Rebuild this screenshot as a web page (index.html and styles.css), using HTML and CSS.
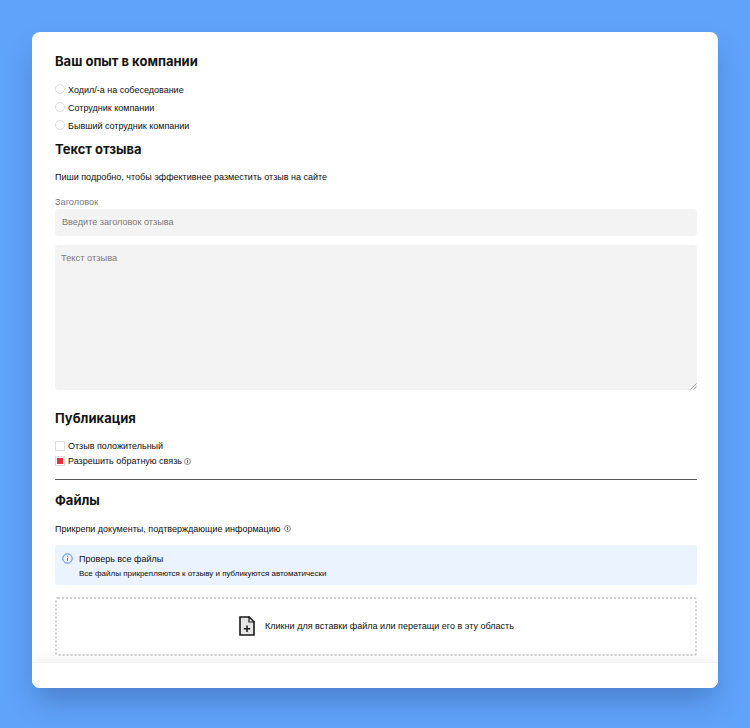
FILE: index.html
```html
<!DOCTYPE html>
<html lang="ru">
<head>
<meta charset="utf-8">
<title>Отзыв</title>
<link rel="stylesheet" href="styles.css">
</head>
<body>
<main class="card">
  <form class="content">
    <h2 class="title title-first">Ваш опыт в компании</h2>
    <div class="options">
      <label class="option"><span class="radio"></span>Ходил/-а на собеседование</label>
      <label class="option"><span class="radio"></span>Сотрудник компании</label>
      <label class="option"><span class="radio"></span>Бывший сотрудник компании</label>
    </div>
    <h2 class="title title-text">Текст отзыва</h2>
    <p class="hint hint-text">Пиши подробно, чтобы эффективнее разместить отзыв на сайте</p>
    <div class="field-label">Заголовок</div>
    <div class="input">Введите заголовок отзыва</div>
    <div class="textarea">Текст отзыва
      <svg class="grip" width="7" height="7" viewBox="0 0 7 7"><path d="M0.5 6.5L6.5 0.5M3.5 6.5L6.5 3.5" stroke="#a0a0a0" stroke-width="1" fill="none"/></svg>
    </div>
    <h2 class="title title-pub">Публикация</h2>
    <div class="checks">
      <label class="option"><span class="check"></span>Отзыв положительный</label>
      <label class="option"><span class="check check-on"></span>Разрешить обратную связь
        <svg class="tip" width="7" height="7" viewBox="0 0 7 7"><circle cx="3.5" cy="3.5" r="3" fill="none" stroke="#444" stroke-width="0.6"/><path d="M3.5 2v3.2" stroke="#444" stroke-width="0.8"/></svg>
      </label>
    </div>
    <hr class="rule">
    <h2 class="title title-files">Файлы</h2>
    <p class="hint hint-files">Прикрепи документы, подтверждающие информацию
      <svg class="tip" width="7" height="7" viewBox="0 0 7 7"><circle cx="3.5" cy="3.5" r="3" fill="none" stroke="#444" stroke-width="0.6"/><path d="M3.5 2v3.2" stroke="#444" stroke-width="0.8"/></svg>
    </p>
    <div class="notice">
      <svg class="notice-icon" width="11" height="11" viewBox="0 0 11 11"><circle cx="5.5" cy="5.5" r="4.7" fill="none" stroke="#3b7dd8" stroke-width="0.9"/><path d="M5.5 4.8v3" stroke="#3b7dd8" stroke-width="1"/><circle cx="5.5" cy="3.2" r="0.6" fill="#3b7dd8"/></svg>
      <div>
        <div class="notice-title">Проверь все файлы</div>
        <div class="notice-text">Все файлы прикрепляются к отзыву и публикуются автоматически</div>
      </div>
    </div>
    <div class="drop">
      <svg width="16" height="20" viewBox="0 0 16 20"><path d="M1 1H10L15 6V19H1Z" fill="#e6e6e6" stroke="#1a1a1a" stroke-width="1.6" stroke-linejoin="miter"/><path d="M10 1V6H15Z" fill="#fff" stroke="#1a1a1a" stroke-width="1.2"/><path d="M8 9.5V16M4.8 12.8H11.2" stroke="#1a1a1a" stroke-width="1.5"/></svg>
      <span>Кликни для вставки файла или перетащи его в эту область</span>
    </div>
  </form>
  <footer class="footer"></footer>
</main>
</body>
</html>
```
FILE: styles.css
```css
html, body { margin: 0; height: 100%; }
body {
  background: #60a3fa;
  height: 728px;
  padding: 32px;
  box-sizing: border-box;
  font-family: "Liberation Sans", Arial, sans-serif;
  font-size: 9px;
  color: #0d0d0d;
  overflow: hidden;
}
.card {
  width: 686px;
  height: 656px;
  background: #fff;
  border-radius: 8px;
  display: flex;
  flex-direction: column;
  overflow: hidden;
  box-shadow: 0 16px 28px -4px rgba(30, 60, 110, 0.34);
}
.content {
  flex: 1;
  min-height: 0;
  overflow: hidden;
  padding: 0 21px 0 23px;
  display: flex;
  flex-direction: column;
}
.title {
  margin: 0;
  font-family: Inter, "Noto Sans", sans-serif;
  font-size: 13px;
  line-height: 16px;
  font-weight: 700;
  color: #141414;
  flex: none;
}
.title-first { margin-top: 21px; }
.title-text { margin-top: 9px; }
.title-pub { margin-top: 20px; }
.title-files { margin-top: 12px; }
.options {
  margin-top: 16px;
  display: flex;
  flex-direction: column;
  gap: 7px;
}
.checks {
  margin-top: 15px;
  display: flex;
  flex-direction: column;
  gap: 4px;
}
.option {
  display: flex;
  align-items: center;
  gap: 3px;
  height: 11px;
  line-height: 11px;
}
.radio {
  width: 10px;
  height: 10px;
  border: 1px solid #dcdcdc;
  border-radius: 50%;
  background: #fff;
  margin-top: -4px;
  flex: none;
  box-sizing: border-box;
}
.check {
  width: 10px;
  height: 10px;
  border: 1px solid #dcdcdc;
  background: #fff;
  margin-top: -2px;
  flex: none;
  box-sizing: border-box;
}
.check-on {
  background: #e5323a;
  box-shadow: inset 0 0 0 1px #fff;
}
.tip { flex: none; margin-left: -1px; }
.hint { margin: 0; line-height: 11px; flex: none; }
.hint-text { margin-top: 15px; }
.hint-files { margin-top: 16px; }
.hint-files .tip { margin-left: 1px; }
.field-label {
  margin-top: 14px;
  line-height: 11px;
  font-size: 9.2px;
  color: #777;
  flex: none;
}
.input {
  margin-top: 1px;
  height: 27px;
  line-height: 27px;
  font-size: 9.15px;
  background: #f3f3f3;
  border-radius: 4px;
  padding: 0 7px;
  color: #7a7a7a;
  flex: none;
}
.textarea {
  position: relative;
  margin-top: 9px;
  height: 145px;
  background: #f3f3f3;
  border-radius: 4px;
  padding: 8px 6px;
  box-sizing: border-box;
  line-height: 11px;
  font-size: 9.3px;
  color: #7a7a7a;
  flex: none;
}
.grip { position: absolute; right: 0; bottom: 0; }
.rule {
  margin: 12px 0 0;
  border: 0;
  border-top: 1px solid #5a5a5a;
  width: 100%;
  flex: none;
}
.notice {
  margin-top: 10px;
  height: 40px;
  flex: none;
  background: #ebf3fe;
  border-radius: 3px;
  padding: 9px 7px;
  box-sizing: border-box;
  display: flex;
  gap: 6px;
}
.notice-icon { flex: none; margin-top: -1px; }
.notice-title { line-height: 11px; }
.notice-text { margin-top: 4px; font-size: 8px; line-height: 10px; }
.drop {
  margin-top: 12px;
  height: 59px;
  flex: none;
  border: 2px dotted #d0d0d0;
  border-radius: 3px;
  box-sizing: border-box;
  padding: 0 0 2px 1px;
  font-size: 9.05px;
  display: flex;
  align-items: center;
  justify-content: center;
  gap: 10px;
}
.footer {
  flex: none;
  height: 26px;
  background: #fff;
  border-top: 1px solid #f2f2f2;
  box-sizing: border-box;
  box-shadow: 0 -6px 10px rgba(0, 0, 0, 0.04);
  position: relative;
}
```
